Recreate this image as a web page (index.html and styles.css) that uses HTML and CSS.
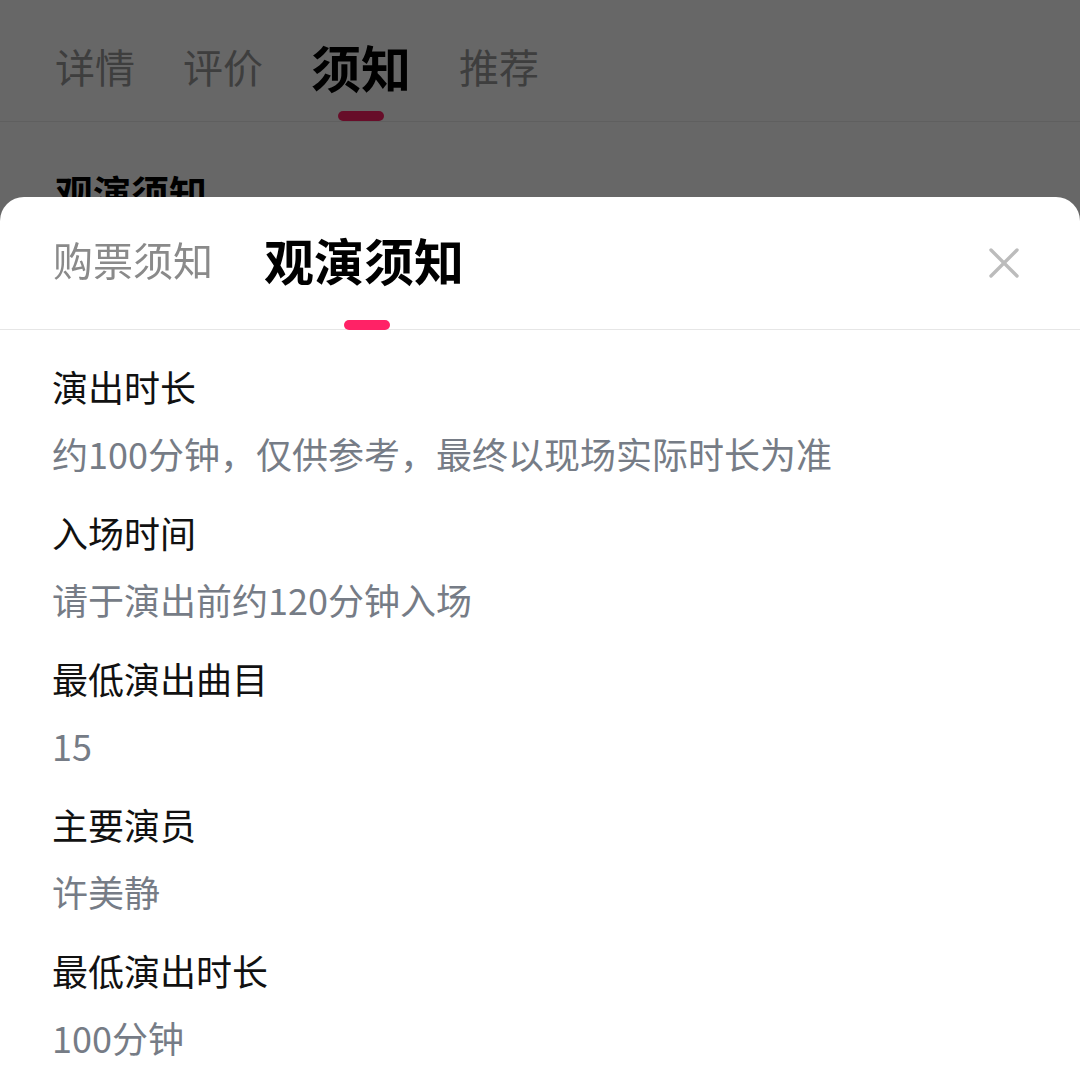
FILE: index.html
```html
<!DOCTYPE html>
<html lang="zh-CN">
<head>
<meta charset="utf-8">
<title>观演须知</title>
<link rel="stylesheet" href="styles.css">
</head>
<body>
<div class="page">
  <nav class="page-tabs">
    <span class="page-tab">详情</span>
    <span class="page-tab">评价</span>
    <span class="page-tab active">须知<i class="bar"></i></span>
    <span class="page-tab">推荐</span>
  </nav>
  <h2 class="page-heading">观演须知</h2>
</div>
<div class="mask"></div>
<section class="sheet">
  <header class="sheet-head">
    <span class="sheet-tab">购票须知</span>
    <span class="sheet-tab active">观演须知<i class="bar"></i></span>
    <button class="close" aria-label="关闭">
      <svg width="30" height="30" viewBox="0 0 30 30"><path d="M2 2 L28 28 M28 2 L2 28" stroke="#bcbcbc" stroke-width="3.4" stroke-linecap="round" fill="none"/></svg>
    </button>
  </header>
  <div class="sheet-body">
    <div class="item"><div class="item-title">演出时长</div><div class="item-value">约100分钟，仅供参考，最终以现场实际时长为准</div></div>
    <div class="item"><div class="item-title">入场时间</div><div class="item-value">请于演出前约120分钟入场</div></div>
    <div class="item"><div class="item-title">最低演出曲目</div><div class="item-value">15</div></div>
    <div class="item"><div class="item-title">主要演员</div><div class="item-value">许美静</div></div>
    <div class="item"><div class="item-title">最低演出时长</div><div class="item-value">100分钟</div></div>
  </div>
</section>
</body>
</html>
```

FILE: styles.css
```css
* { box-sizing: border-box; }
html, body { margin: 0; padding: 0; }
body {
  font-family: "Noto Sans CJK SC", "Noto Sans", sans-serif;
  background: #fff;
  color: #000;
  width: 1080px;
  height: 1088px;
  overflow: hidden;
}
.page-tabs {
  display: flex;
  align-items: center;
  gap: 48px;
  height: 122px;
  padding: 10px 0 0 55px;
  border-bottom: 1px solid #ebebeb;
}
.page-tab {
  position: relative;
  font-size: 40px;
  line-height: 56px;
  color: #999;
}
.page-tab.active {
  font-size: 50px;
  font-weight: 700;
  color: #000;
}
.bar {
  position: absolute;
  left: 50%;
  width: 46px;
  height: 10px;
  margin-left: -23px;
  border-radius: 5px;
  background: #ff2266;
}
.page-tab .bar { bottom: -27px; }
.page-heading {
  margin: 45px 0 0 55px;
  font-size: 38px;
  line-height: 50px;
  font-weight: 700;
}
.mask {
  position: fixed;
  inset: 0;
  background: rgba(0, 0, 0, 0.596);
}
.sheet {
  position: fixed;
  left: 0;
  right: 0;
  top: 197px;
  bottom: 0;
  background: #fff;
  border-radius: 24px 24px 0 0;
}
.sheet-head {
  position: relative;
  display: flex;
  align-items: center;
  gap: 51px;
  height: 133px;
  padding: 0 56px 0 53px;
  border-bottom: 1px solid #e6e6e6;
}
.sheet-tab {
  position: relative;
  display: flex;
  align-items: center;
  height: 100%;
  padding-bottom: 8px;
  font-size: 40px;
  color: #8a8a8a;
}
.sheet-tab.active {
  font-size: 50px;
  font-weight: 700;
  color: #000;
}
.sheet-tab .bar { bottom: -1px; margin-left: -20px; }
.close {
  margin-left: auto;
  width: 40px;
  height: 40px;
  padding: 0;
  border: 0;
  background: none;
  display: flex;
  align-items: center;
  justify-content: center;
}
.sheet-body {
  padding: 31px 52px 0;
  display: flex;
  flex-direction: column;
  gap: 29px;
}
.item-title {
  font-size: 36px;
  line-height: 50px;
  color: #111;
  margin-bottom: 17px;
}
.item-value {
  font-size: 36px;
  line-height: 50px;
  color: #767c86;
}
```
